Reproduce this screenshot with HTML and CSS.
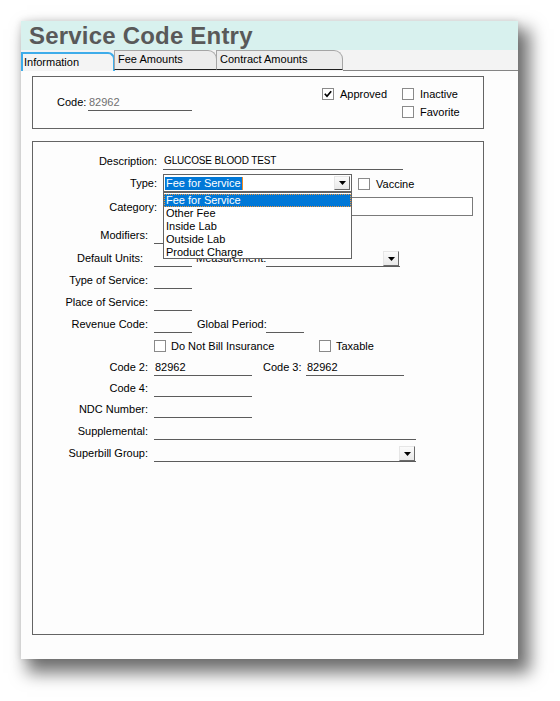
FILE: index.html
```html
<!DOCTYPE html>
<html>
<head>
<meta charset="utf-8">
<title>Service Code Entry</title>
<link rel="stylesheet" href="styles.css">
</head>
<body>
<div class="stage">
<div class="window">
  <div class="titlebar">Service Code Entry</div>
  <div class="tabs">
    <div class="tab active">Information</div>
    <div class="tab fee">Fee Amounts</div>
    <div class="tab contract">Contract Amounts</div>
    <div class="tabfill"></div>
  </div>
  <div class="content">
    <div class="panel top">
      <div class="code">
        <span class="lbl-code">Code:</span>
        <span class="field code-val">82962</span>
      </div>
      <div class="checks">
        <div class="chk"><span class="cb"><svg width="8" height="8" viewBox="0 0 8 8"><path d="M0.8 3.8 L3 6.2 L7.2 1.2" fill="none" stroke="#000" stroke-width="1.7"/></svg></span>Approved</div>
        <div class="chk"><span class="cb"></span>Inactive</div>
        <div></div>
        <div class="chk"><span class="cb"></span>Favorite</div>
      </div>
    </div>

    <div class="panel main">
      <div class="row wide h28">
        <span class="lbl">Description:</span>
        <span class="field f-desc caps">GLUCOSE BLOOD TEST</span>
      </div>
      <div class="row wide boxed h22">
        <span class="lbl">Type:</span>
        <div class="combo">
          <span class="seltext">Fee for Service</span><span class="caret"></span>
          <span class="ddbtn small"><svg width="7" height="4" viewBox="0 0 7 4"><path d="M0 0H7L3.5 4Z" fill="#000"/></svg></span>
        </div>
        <div class="chk vacc"><span class="cb"></span>Vaccine</div>
      </div>
      <div class="row wide boxed h24">
        <span class="lbl">Category:</span>
        <div class="catbox"></div>
      </div>
      <div class="row h28">
        <span class="lbl">Modifiers:</span>
        <span class="field f-short"></span>
      </div>
      <div class="row h23">
        <span class="lbl short">Default Units:</span>
        <span class="field f-short"></span>
        <span class="sublbl meas">Measurement:</span>
        <span class="field f-meas"><span class="ddbtn"><svg width="7" height="4" viewBox="0 0 7 4"><path d="M0 0H7L3.5 4Z" fill="#000"/></svg></span></span>
      </div>
      <div class="row h22">
        <span class="lbl">Type of Service:</span>
        <span class="field f-short"></span>
      </div>
      <div class="row h22">
        <span class="lbl">Place of Service:</span>
        <span class="field f-short"></span>
      </div>
      <div class="row h22">
        <span class="lbl">Revenue Code:</span>
        <span class="field f-short"></span>
        <span class="sublbl glob">Global Period:</span>
        <span class="field f-short"></span>
      </div>
      <div class="row h19 checkrow">
        <span class="lbl"></span>
        <div class="chk dnb"><span class="cb"></span>Do Not Bill Insurance</div>
        <div class="chk"><span class="cb"></span>Taxable</div>
      </div>
      <div class="row h24">
        <span class="lbl">Code 2:</span>
        <span class="field f-mid">82962</span>
        <span class="sublbl c3">Code 3:</span>
        <span class="field f-mid">82962</span>
      </div>
      <div class="row h21">
        <span class="lbl">Code 4:</span>
        <span class="field f-mid"></span>
      </div>
      <div class="row h21">
        <span class="lbl">NDC Number:</span>
        <span class="field f-mid"></span>
      </div>
      <div class="row h22">
        <span class="lbl">Supplemental:</span>
        <span class="field f-long"></span>
      </div>
      <div class="row h22">
        <span class="lbl">Superbill Group:</span>
        <span class="field f-long"><span class="ddbtn"><svg width="7" height="4" viewBox="0 0 7 4"><path d="M0 0H7L3.5 4Z" fill="#000"/></svg></span></span>
      </div>

      <div class="droplist">
        <div class="opt sel">Fee for Service</div>
        <div class="opt">Other Fee</div>
        <div class="opt">Inside Lab</div>
        <div class="opt">Outside Lab</div>
        <div class="opt">Product Charge</div>
      </div>
    </div>
  </div>
</div>
</div>
</body>
</html>
```

FILE: styles.css
```css
html, body {
  margin: 0;
  padding: 0;
  background: #ffffff;
}
body {
  font-family: "Liberation Sans", Arial, sans-serif;
  font-size: 11px;
  color: #000;
}
.stage {
  padding: 21px 0 42px 21px;
  min-height: 701px;
  box-sizing: border-box;
}
.window {
  width: 497px;
  height: 638px;
  background: #fdfdfd;
  box-shadow: 9px 11px 16px 3px rgba(0, 0, 0, 0.55), 0 0 7px rgba(0, 0, 0, 0.12);
}
.titlebar {
  height: 29px;
  box-sizing: border-box;
  background: #d8f1ee;
  padding: 1px 0 0 8px;
  font-size: 24px;
  font-weight: bold;
  line-height: 28px;
  color: #595959;
  letter-spacing: 0.2px;
}
.tabs {
  display: flex;
  align-items: flex-start;
  height: 21px;
  background: #f3f3f3;
}
.tab {
  box-sizing: border-box;
  height: 20px;
  border: 1px solid #a5a5a5;
  border-bottom: 1px solid #1f1f1f;
  border-top-right-radius: 9px;
  background: #ececec;
  padding-left: 3px;
  line-height: 17px;
  flex: none;
}
.tab.active {
  margin-top: 2px;
  height: 19px;
  width: 94px;
  border: 2px solid #3eacea;
  border-bottom: none;
  border-top-right-radius: 7px;
  background: #f4f4f4;
  padding-left: 1px;
  line-height: 16px;
}
.tab.fee {
  width: 103px;
  margin-left: -1px;
}
.tab.contract {
  width: 127px;
  margin-left: -1px;
}
.tabfill {
  flex: 1;
  height: 21px;
  box-sizing: border-box;
  border-bottom: 1px solid #858585;
}
.content {
  padding: 5px 0 0 11px;
}
.panel {
  box-sizing: border-box;
  width: 452px;
  border: 1px solid #646464;
}
.top {
  height: 53px;
  display: flex;
  align-items: flex-start;
  padding: 8px 0 0 24px;
}
.code {
  display: flex;
  align-items: flex-end;
  margin-top: 9px;
  flex: none;
}
.lbl-code {
  width: 31px;
  line-height: 16px;
  padding-bottom: 1px;
}
.code-val {
  width: 103px;
  color: #707070;
}
.checks {
  margin-left: 130px;
  display: grid;
  grid-template-columns: 80px auto;
  grid-auto-rows: 18px;
}
.chk {
  display: flex;
  align-items: center;
  white-space: nowrap;
}
.cb {
  box-sizing: border-box;
  width: 12px;
  height: 12px;
  border: 1px solid #8a8a8a;
  background: #fff;
  margin-right: 6px;
  display: flex;
  align-items: center;
  justify-content: center;
  flex: none;
}
.main {
  position: relative;
  height: 494px;
  margin-top: 12px;
}
.row {
  display: flex;
  align-items: flex-end;
}
.h19 { height: 19px; }
.h21 { height: 21px; }
.h22 { height: 22px; }
.h23 { height: 23px; }
.h24 { height: 24px; }
.h28 { height: 28px; }
.lbl {
  box-sizing: border-box;
  width: 115px;
  margin-right: 6px;
  text-align: right;
  line-height: 16px;
  padding-bottom: 1px;
  flex: none;
  white-space: nowrap;
}
.lbl.short {
  padding-right: 5px;
}
.row.wide .lbl {
  width: 124px;
}
.row.boxed .lbl {
  line-height: 18px;
  padding-bottom: 0;
}
.field {
  display: flex;
  align-items: flex-end;
  justify-content: flex-start;
  height: 16px;
  line-height: 16px;
  border-bottom: 1px solid #5c5c5c;
  padding-left: 1px;
  flex: none;
  white-space: nowrap;
}
.f-short { width: 37px; }
.f-mid { width: 97px; }
.f-desc { width: 239px; }
.f-long { width: 261px; }
.f-meas { width: 133px; }
.f-meas, .f-long { justify-content: flex-end; }
.caps {
  font-size: 10px;
  letter-spacing: -0.15px;
}
.sublbl {
  box-sizing: border-box;
  line-height: 16px;
  padding-bottom: 1px;
  flex: none;
  white-space: nowrap;
}
.meas { margin-left: 4px; width: 70px; }
.glob { margin-left: 5px; width: 69px; }
.c3 { margin-left: 11px; width: 43px; }
.ddbtn {
  box-sizing: border-box;
  width: 16px;
  height: 15px;
  margin-right: 1px;
  border: 1px solid;
  border-color: #e6e6e6 #6a6a6a #6a6a6a #e6e6e6;
  background: linear-gradient(#fbfbfb, #e9e9e9);
  display: flex;
  align-items: center;
  justify-content: center;
  flex: none;
}
.ddbtn.small {
  height: 14px;
  margin-left: auto;
}
.combo {
  box-sizing: border-box;
  width: 189px;
  height: 18px;
  border: 1px solid #646464;
  background: #fff;
  display: flex;
  align-items: center;
  padding-left: 1px;
  flex: none;
}
.seltext {
  background: #0078d7;
  color: #fff;
  line-height: 13px;
  padding: 0 1px;
}
.caret {
  width: 1px;
  height: 13px;
  background: #f08a24;
}
.vacc {
  margin-left: 6px;
  margin-bottom: 2px;
}
.catbox {
  box-sizing: border-box;
  width: 310px;
  height: 19px;
  border: 1px solid #7a7a7a;
  background: #fff;
  flex: none;
}
.checkrow .chk {
  line-height: 12px;
}
.dnb {
  width: 165px;
}
.checkrow .cb {
  margin-right: 5px;
}
.droplist {
  position: absolute;
  left: 130px;
  top: 50px;
  width: 189px;
  height: 67px;
  box-sizing: border-box;
  border: 1px solid #646464;
  background: #fff;
  padding-top: 1px;
}
.opt {
  height: 13px;
  line-height: 13px;
  padding-left: 2px;
  white-space: nowrap;
}
.opt.sel {
  background: #0078d7;
  color: #fff;
  outline: 1px dotted #f0953a;
  outline-offset: -1px;
}
```
